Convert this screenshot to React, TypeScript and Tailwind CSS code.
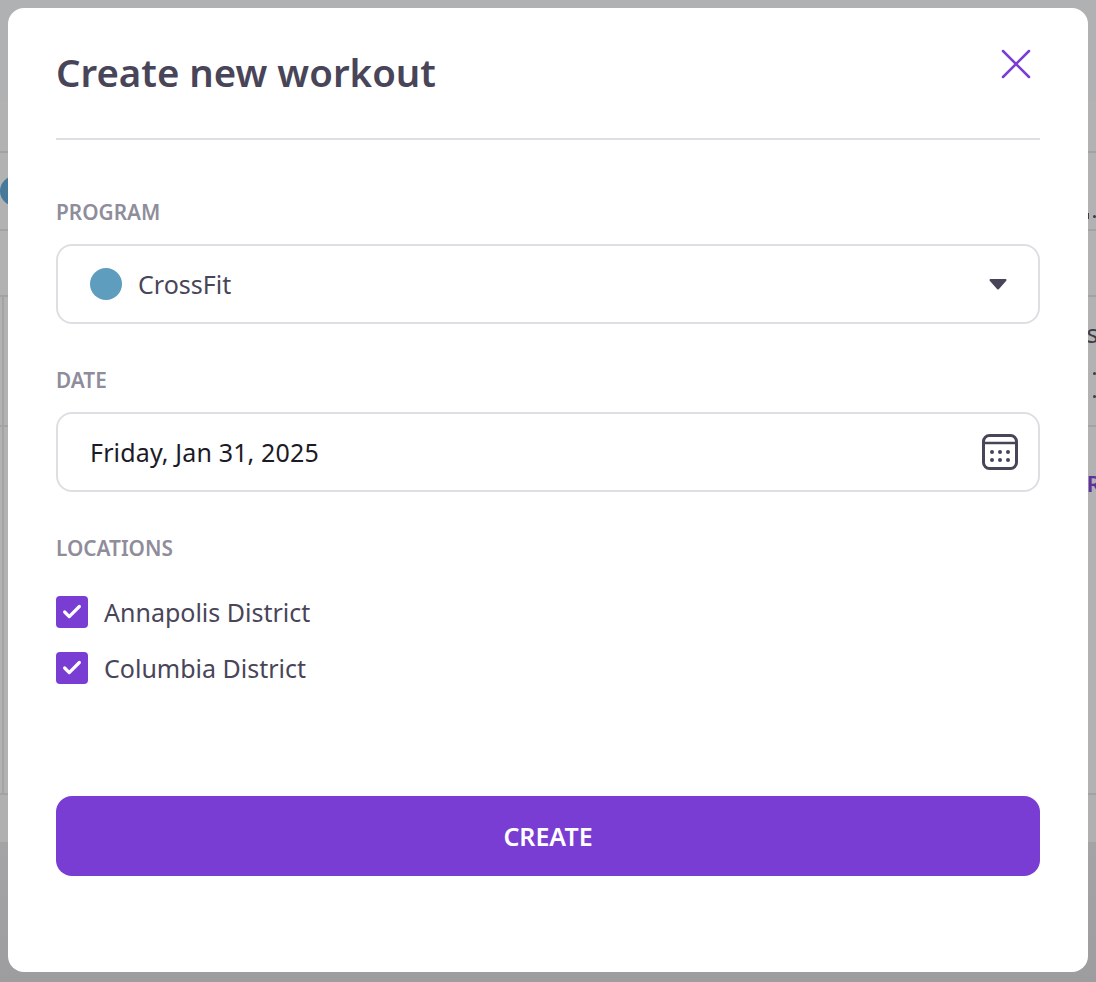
import type { ReactNode } from "react";
import { Check } from "lucide-react";

function Field({ label, gap, children }: { label: string; gap: string; children: ReactNode }) {
  return (
    <div className={`flex flex-col ${gap}`}>
      <div className="text-[20.8px] leading-[28px] font-semibold text-[#8f8d9b]">{label}</div>
      {children}
    </div>
  );
}

function Location({ name }: { name: string }) {
  return (
    <label className="flex h-8 items-center gap-4">
      <span className="flex size-8 items-center justify-center rounded bg-[#7a3dd4] text-white">
        <Check size={22} strokeWidth={3.5} />
      </span>
      <span className="pt-0.5 text-[25px] text-[#494559]">{name}</span>
    </label>
  );
}

// what shows of the page behind the backdrop, around the modal's edges
function PageBehind() {
  return (
    <div className="flex h-full flex-col overflow-hidden bg-[#b2b2b2]">
      <div className="h-[102px] bg-[#b0b1b2]" />
      <div className="h-[51px] border-b-2 border-[#a3a3a3]" />
      <div className="flex h-[78px] items-center justify-between border-b-2 border-[#a3a3a3]">
        <div className="size-[30px] rounded-full bg-[#47799a]" />
        <div className="mt-[50px] flex items-center gap-1">
          <div className="h-[6px] w-0.5 bg-[#3e3c48]" />
          <div className="size-[3px] rounded-full bg-[#3e3c48]" />
        </div>
      </div>
      <div className="h-[66px] border-b-2 border-[#a3a3a3]" />
      <div className="h-[130px] border-b-2 border-[#a3a3a3]">
        <div className="ml-0.5 flex h-full flex-col items-end border-l-2 border-[#a3a3a3] pt-[20px]">
          <span className="mr-[-18px] text-[25px] leading-[32px] text-[#3e3c48]">su</span>
          <div className="mt-[23px] size-[3px] rounded-full bg-[#3e3c48]" />
          <div className="mt-5 size-[3px] rounded-full bg-[#3e3c48]" />
        </div>
      </div>
      <div className="h-[368px] border-b-2 border-[#a3a3a3]">
        <div className="ml-0.5 flex h-full justify-end border-l-2 border-[#a3a3a3] pt-[41px]">
          <span className="mr-[-5px] text-[22px] leading-[30px] font-semibold text-[#5b32a0]">R</span>
        </div>
      </div>
      <div className="h-[47px] bg-[#b0b0b0]" />
      <div className="flex-1 bg-gradient-to-b from-[#a4a4a6] to-[#9d9d9f]" />
    </div>
  );
}

export default function App() {
  return (
    <div className="relative h-[982px] overflow-hidden font-['Noto_Sans',sans-serif]">
      <PageBehind />
      <div className="absolute inset-0 px-2 pt-2 pb-[10px]">
        <div className="flex h-full flex-col rounded-2xl bg-white px-12">
          <div className="flex h-[132px] shrink-0 items-start justify-between border-b-2 border-[#dfdfe3]">
            <h1 className="mt-[37px] text-[38.4px] leading-[54px] font-semibold text-[#494559]">Create new workout</h1>
            <button className="mt-10 mr-2 text-[#7a3dd4]">
              <svg width="32" height="32" viewBox="0 0 32 32" fill="none" stroke="currentColor" strokeWidth="2.5" strokeLinecap="round">
                <path d="M3 3l26 26M29 3L3 29" />
              </svg>
            </button>
          </div>
          <div className="flex flex-col gap-[42px] pt-[58px]">
            <Field label="PROGRAM" gap="gap-[18px]">
              <div className="flex h-20 items-center rounded-2xl border-2 border-[#dfdfe3] pr-[31px] pl-8">
                <span className="size-8 rounded-full bg-[#5f9dbf]" />
                <span className="ml-4 pt-0.5 text-[25px] text-[#494559]">CrossFit</span>
                <svg className="ml-auto" width="18" height="12" viewBox="0 0 18 12">
                  <path d="M1.5 2h15L9 10.5z" fill="#494559" stroke="#494559" strokeWidth="2" strokeLinejoin="round" />
                </svg>
              </div>
            </Field>
            <Field label="DATE" gap="gap-[18px]">
              <div className="flex h-20 items-center justify-between rounded-2xl border-2 border-[#dfdfe3] pr-5 pl-8">
                <span className="pt-0.5 text-[25px] tracking-[0.15px] text-[#1c1a26]">Friday, Jan 31, 2025</span>
                <svg width="36" height="36" viewBox="0 0 36 36" fill="none" stroke="#494559" strokeWidth="3">
                  <rect x="1.5" y="1.5" width="33" height="33" rx="6" />
                  <path d="M2 9h32" strokeWidth="2.5" />
                  <g fill="#494559" stroke="none">
                    <circle cx="10" cy="18" r="2" />
                    <circle cx="18" cy="18" r="2" />
                    <circle cx="26" cy="18" r="2" />
                    <circle cx="10" cy="26" r="2" />
                    <circle cx="18" cy="26" r="2" />
                    <circle cx="26" cy="26" r="2" />
                  </g>
                </svg>
              </div>
            </Field>
            <Field label="LOCATIONS" gap="gap-[34px]">
              <div className="flex flex-col gap-6">
                <Location name="Annapolis District" />
                <Location name="Columbia District" />
              </div>
            </Field>
          </div>
          <button className="mt-[112px] h-20 w-full shrink-0 rounded-2xl bg-[#7a3dd4] pt-0.5 text-[25px] font-semibold text-white">CREATE</button>
        </div>
      </div>
    </div>
  );
}
